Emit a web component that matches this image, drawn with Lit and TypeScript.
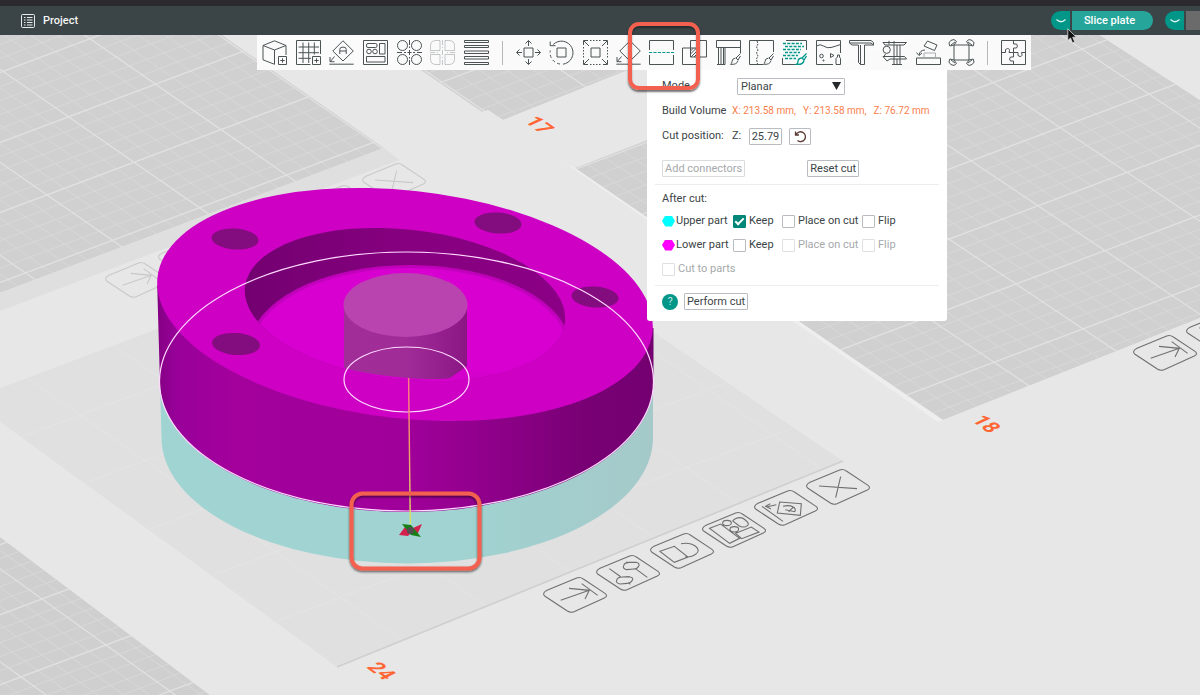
import { LitElement, html, svg, css } from "lit";
import { customElement } from "lit/decorators.js";

/* Toolbar glyphs, each drawn in a 25 x 25 box. */
const icons: Record<string, unknown> = {
  cube: svg`<path d="M12.5 .8 24 5.5V15M12.5 24.3 1 19.8V5.5L12.5 .8M1 5.5 12.5 10 24 5.5M12.5 10V24.3M16.5 24.5V16.5H24.5V24.5ZM20.5 18.3V22.7M18.3 20.5H22.7"/>`,
  grid: svg`<path d="M14.5 24.5H.5V.5H24.5V14M7 2.5V23M12.7 2.5V23M18.3 2.5V14.5M2.5 7H23M2.5 12.7H23M2.5 18.3H15M16.5 24.5V16.5H24.5V24.5ZM20.5 18.3V22.7M18.3 20.5H22.7"/>`,
  orient: svg`<path d="M14 .8 24.3 11 14 21 3.8 11ZM10.8 14V9.5Q10.8 7.2 13 7.2H15Q17.2 7.2 17.2 9.5V14M10.8 11H17.2M5.5 16.5 1.3 21.5M1 17V21.7H5.5M.3 24.2H24.7"/>`,
  arrange: svg`<path d="M.5 .5H24.5V24.5H.5ZM16.5 3.5H22V14H16.5ZM3.5 16.5H22V22H3.5Z"/><rect x="3.5" y="3.5" width="10.5" height="4" rx="1.5"/><circle cx="6" cy="11.5" r="2.3"/><circle cx="12" cy="11.5" r="2.3"/>`,
  objects: svg`<circle cx="5.5" cy="5.5" r="5"/><circle cx="19.5" cy="5.5" r="5"/><circle cx="5.5" cy="19.5" r="5"/><circle cx="19.5" cy="19.5" r="5"/><path d="M12.5 0V5M12.5 6.5V8M12.5 10V15M12.5 17V18.5M12.5 20V25M0 12.5H5M7 12.5H9M10.5 12.5H14.5M16 12.5H18M20 12.5H25"/>`,
  parts: svg`<g opacity=".3"><path d="M10 .5V10.5H.5V6Q.5 .5 6 .5ZM15 .5H19Q24.5 .5 24.5 6V10.5H15ZM.5 14.5H10V24.5H6Q.5 24.5 .5 19ZM15 14.5H24.5V19Q24.5 24.5 19 24.5H15ZM12.5 0V5M12.5 7V8M12.5 10V15M12.5 17V18M12.5 20V25M0 12.5H5M7 12.5H8M17 12.5H18M20 12.5H25"/></g>`,
  layers: svg`<path d="M.5 .5H24.5V2.5H.5ZM.5 5.5H24.5V7.5H.5ZM.5 11H24.5V13.5H.5ZM.5 16.5H24.5V19H.5ZM.5 22.5H24.5V24.5H.5Z"/>`,
  move: svg`<path d="M8 8H17V17H8ZM12.5 6V.8M9.5 3.5 12.5 .5 15.5 3.5M12.5 19V24.2M9.5 21.5 12.5 24.5 15.5 21.5M6 12.5H.8M3.5 9.5 .5 12.5 3.5 15.5M19 12.5H24.2M21.5 9.5 24.5 12.5 21.5 15.5"/>`,
  rotate: svg`<path d="M8 8H17V17H8ZM4.2 4.5A11.6 11.6 0 1 1 14 24.2M1.2 1.5V5.7H6.5"/><path stroke-dasharray="3 2.5" d="M11 24A11.6 11.6 0 0 1 1.2 10.5"/>`,
  scale: svg`<path d="M8 8H17V17H8ZM.5 5V.5H5M20 .5H24.5V5M.5 20V24.5H5M20 24.5H24.5V20M1 1 6 6M24 1 19 6M1 24 6 19M24 24 19 19"/><path stroke-dasharray="1.5 1.5" d="M7 .5H19M7 24.5H19M.5 7V19M24.5 7V19"/>`,
  lay: svg`<path d="M14 .8 24.3 11 14 21 3.8 11ZM5.5 16.5 1.3 21.5M1 17V21.7H5.5M.3 24.2H24.7"/>`,
  cut: svg`<path d="M.5 10V.5H24.5V10M.5 15V24.5H24.5V15"/><path stroke="#00968a" stroke-dasharray="3.2 1.2" d="M0 12.5H25"/>`,
  boolean: svg`<path d="M8.5 .5H24.5V17H8.5ZM.5 8H17V24.5H.5ZM8.5 11 11.5 8M8.5 14 14.5 8M9 17 17 9M12 17 17 12M15 17 17 15"/>`,
  supports: svg`<path d="M24.5 13V.5H.5V7.5H24.5M2.5 7.5V24.5M5 7.5V24.5M7.5 7.5V24.5M1 24.5H9V7.5M24.5 13.5 20 18 22 20 24.5 16M19.5 18Q16 18.5 16 21.5 16 23.5 14.5 24.3 21 25 22 20.5"/>`,
  seam: svg`<path d="M14 24.5H.5V.5H24.5V12M24.5 13.5 20 18 22 20 24.5 16M19.5 18Q16 18.5 16 21.5 16 23.5 14.5 24.3 21 25 22 20.5"/><path stroke-dasharray="2 1" d="M8 1 9 4 7.5 7 9 10 7.5 13 9 16 7.5 19 8.5 24"/>`,
  fuzzy: svg`<path d="M4 .5H24.5V10M.5 18V24.5H14" /><g stroke="#00968a" stroke-width="1.3"><path stroke-dasharray="3 1.3" d="M1 3.5H20M3 6.5H22M1 9.5H19M3 12.5H18M1 15.5H16M3 18.5H14"/><path d="M24.5 13.5 20 18 22 20 24.5 16M19.5 18Q16 18.5 16 21.5 16 23.5 14.5 24.3 21 25 22 20.5"/></g>`,
  color: svg`<path d="M17 24.5H.5V.5H24.5V13M.5 6Q4 3.5 7.5 6T15 7.5 24.5 4.5M20 24.5V18.5L21.5 17V15H23.5V17L24.5 18.5V24.5ZM14.5 13.5 18 15.5 14.5 17.5Z"/><circle cx="5.5" cy="16" r="1.8"/><circle cx="7.5" cy="20.5" r=".6"/>`,
  text: svg`<path d="M.5 .5H22L24.5 2.5V5H15.5V24.5H11.5L9.5 22.5V5H3L.5 3ZM.5 3H22L24.5 5M11.5 5V24.5"/>`,
  measure: svg`<path d="M7 .8V4.5M12 4.5V1M1 2.5H24.5L22 5H3ZM1 16.5H22.5L24.5 19H8L5 21ZM12 5V24.5M18 5V24.5M15 5V16M15 19V24.5M10 24.5H20M3.5 14 2 16.5"/><circle cx="4.7" cy="9.8" r="3.6"/>`,
  assembly: svg`<path d="M.5 18H24.5V24.5H.5ZM11.5 1 21 5 18.5 10.5 8 6ZM9 10Q4 10 3 15M.5 12.5 3 15.5 6 13"/><path stroke="#a9adae" d="M8 18V13H19.5V18"/>`,
  skirt: svg`<path d="M5 5H20V20H5ZM.8 6A4 4 0 1 1 7.5 1.5L5 5ZM24.2 6A4 4 0 1 0 17.5 1.5L20 5ZM.8 19A4 4 0 1 0 7.5 23.5L5 20ZM24.2 19A4 4 0 1 1 17.5 23.5L20 20ZM2 5 6 2M23 5 19 2M2 20 6 23M23 20 19 23"/>`,
  puzzle: svg`<path d="M.5 .5H24.5V24.5H.5ZM12.5 .5V4Q16.5 3 16.5 6T12.5 8V12.5H17Q16 16.5 19 16.5T20.5 12.5H24.5M12.5 12.5V17Q8.5 16 8.5 19T12.5 21V24.5M.5 12.5H4.5Q3.5 8.5 6.5 8.5T8 12.5H12.5"/>`,
};

const groupOne = ["cube", "grid", "orient", "arrange", "objects", "parts", "layers"];
const groupTwo = ["move", "rotate", "scale", "lay", "cut", "boolean", "supports", "seam", "fuzzy", "color", "text", "measure", "assembly", "skirt"];

const icon = (name: string) =>
  html`<svg class="icon" viewBox="0 0 25 25" aria-hidden="true">${icons[name]}</svg>`;

/* Build plates: outline, then the two families of grid lines across it. */
interface Plate {
  id: string;
  points: string;
  x: number;
  y: number;
  slope: number;
  fill: string;
}
const plates: Plate[] = [
  { id: "p16", points: "0,30 215,30 384,148 0,293", x: 308, y: 97, slope: 0.694, fill: "#d0d0d0" },
  { id: "p17", points: "362,30 482,112 488,110 503,120 728,30", x: 530, y: 49, slope: 0.68, fill: "#d0d0d0" },
  { id: "p18", points: "575,168 930,30 1092,30 1200,100 1200,318 943,420", x: 1016, y: 284, slope: 0.67, fill: "#d0d0d0" },
  { id: "p23", points: "0,537 210,695 0,695", x: 42, y: 599, slope: 0.72, fill: "#cfcfcf" },
];

const gridPath = (p: Plate, major: boolean) => {
  let d = "";
  for (let i = -50; i <= 50; i++) {
    if ((i % 5 === 0) !== major) continue;
    const up = p.y + i * 14;
    const down = p.y - i * 18.6;
    d += `M${p.x - 800} ${up + 300}L${p.x + 800} ${up - 300}`;
    d += `M${p.x - 800} ${down - 800 * p.slope}L${p.x + 800} ${down + 800 * p.slope}`;
  }
  return d;
};

const tile = "M-84-14L5-51Q15-55 25-48L90-5Q100 3 88 9L-3 50Q-13 54-23 48L-90 4Q-101-5-84-14Z";
const tileGlyphs = {
  arrow: "M-43 16L43-14M-18-20L43-14L30 12M20-34L68 1",
  sliders: "M-56-13L-21 12M1 29L7 34M-34 21Q-31 12-18 12L4 11Q18 14 13 22 8 31-2 31L-24 33Q-38 30-34 21ZM-6-33L1-29M22-13L58 13M-13-22Q-10-32 2-32L24-32Q37-29 32-20 28-12 18-12L-4-10Q-17-13-13-22Z",
  shape: "M-66 1L-23-14 18 18-23 34ZM-3-22C35-29 60-4 43 8C35 16 20 19 10 17",
  layout: "M-73-5L-40-18 17 25-13 40ZM5 10L52-9 75 6 23 26ZM-34-21a13 8 0 1 0 26 0a13 8 0 1 0-26 0M-12-2a13 8 0 1 0 26 0a13 8 0 1 0-26 0M-4-27Q4-37 18-37 26-37 34-30L42-22Q46-14 34-10 24-7 16-12Z",
  orient: "M-19-18L46-13 43 22-26 15ZM-29-10L-59-3M-47-13L-61-5-45 3M-72-5L-9 40M-9-5C15-12 34 0 26 11L-2 5M22-3L8 12",
  close: "M-57-3L57 5M8-31L-7 32",
};
type TileName = keyof typeof tileGlyphs;
const tiles: [TileName, number, number, number][] = [
  ["arrow", 575, 595, 1],
  ["sliders", 628, 573, 1],
  ["shape", 682, 551, 1],
  ["layout", 734, 530, 1],
  ["orient", 786, 508, 1],
  ["close", 838, 487, 1],
  ["arrow", 1165, 353, 1],
  ["sliders", 1218, 332, 1],
  ["arrow", 137, 280, 0.25],
  ["sliders", 190, 258, 0.25],
  ["orient", 340, 203, 0.25],
  ["close", 394, 181, 0.25],
];

@customElement("plate-scene")
export class PlateScene extends LitElement {
  static styles = css`
    :host { display: block; }
    .scene { display: block; width: 100%; height: 100%; }
    .minor { stroke: #d8d8d8; stroke-width: 1; fill: none; }
    .major { stroke: #e1e1e1; stroke-width: 1.3; fill: none; }
    .tile { fill: none; stroke: #707070; stroke-width: 1.1; }
    .tile path { vector-effect: non-scaling-stroke; }
    .number { font: 700 18px Roboto, "Liberation Sans", sans-serif; fill: #ff6634; text-anchor: middle; }
    .loop { fill: none; stroke: #ffd9ff; stroke-width: 1.2; }
    .hole { fill: #830c7e; }
  `;

  render() {
    return html`<svg class="scene" viewBox="0 35 1200 660" preserveAspectRatio="xMidYMin slice" role="img" aria-label="Build plates">
      <defs>
        ${plates.map((p) => svg`<clipPath id=${p.id}><polygon points=${p.points}/></clipPath>`)}
        <clipPath id="p24"><polygon points="0,388 474,210 843,461 337,667 0,422"/></clipPath>
        <clipPath id="rim"><ellipse cx="405" cy="304.5" rx="161" ry="75" transform="rotate(6.3 405 304.5)"/></clipPath>
        <linearGradient id="side"><stop offset="0" stop-color="#840083"/><stop offset=".04" stop-color="#99009a"/><stop offset=".15" stop-color="#a3009c"/><stop offset=".5" stop-color="#a0009a"/><stop offset=".7" stop-color="#8c0087"/><stop offset=".86" stop-color="#780074"/><stop offset="1" stop-color="#740070"/></linearGradient>
        <linearGradient id="base"><stop offset="0" stop-color="#a0d4d2"/><stop offset=".6" stop-color="#a0d3d1"/><stop offset="1" stop-color="#a5c9c9"/></linearGradient>
        <linearGradient id="wall"><stop offset="0" stop-color="#720070"/><stop offset=".5" stop-color="#86007f"/><stop offset="1" stop-color="#8b0086"/></linearGradient>
        <linearGradient id="post"><stop offset="0" stop-color="#a02d98"/><stop offset=".5" stop-color="#a02c98"/><stop offset="1" stop-color="#8a1784"/></linearGradient>
        <linearGradient id="axis" x1="0" y1="0" x2="0" y2="1"><stop offset="0" stop-color="#ff7a80"/><stop offset=".5" stop-color="#f0a068"/><stop offset="1" stop-color="#d8e860"/></linearGradient>
        <filter id="drop" x="-10%" y="-10%" width="120%" height="130%"><feDropShadow dx="0" dy="1.5" stdDeviation="1.2" flood-opacity=".6"/></filter>
      </defs>
      <rect x="0" y="30" width="1200" height="670" fill="#e7e7e7"/>
      <polygon points="0,293 384,148 399,160 0,311" fill="#dfdfdf"/>
      <polygon points="565,163 575,168 943,420 938,422" fill="#eeeeee"/>
      ${plates.map((p) => svg`<g clip-path="url(#${p.id})">
        <polygon points=${p.points} fill=${p.fill}/>
        <path class="minor" d=${gridPath(p, false)}/>
        <path class="major" d=${gridPath(p, true)}/>
      </g>`)}
      <g clip-path="url(#p24)">
        <polygon points="0,388 474,210 843,461 337,667 0,422" fill="#e0e0e0"/>
        <path d=${gridPath({ ...plates[0], x: 600, y: 500, slope: 0.7 }, true)} stroke="#e4e4e4" fill="none"/>
      </g>
      <path d="M337 667 843 461" stroke="#cfcfcf" stroke-width="1.6"/>
      ${tiles.map(([name, x, y, o]) => svg`<g class="tile" opacity=${o} transform="translate(${x} ${y}) scale(.3333)"><path d=${tile}/><path d=${tileGlyphs[name]}/></g>`)}
      <text class="number" transform="matrix(.9 .65 -1.05 .5 533 128)">17</text>
      <text class="number" transform="matrix(.9 .65 -1.05 .5 980 427)">18</text>
      <text class="number" transform="matrix(.9 .65 -1.05 .5 375 674)">24</text>

      <path d="M160 384 161.500 438A245 125 0 0 0 653 438V380Z" fill="url(#base)"/>
      <path d="M157.200 285 160 384A246.700 130 0 0 0 653.500 380V328Z" fill="url(#side)"/>
      <ellipse cx="405" cy="304.500" rx="249" ry="114" transform="rotate(6.3 405 304.5)" fill="#cd00c4"/>
      <g clip-path="url(#rim)">
        <rect x="240" y="220" width="330" height="170" fill="url(#wall)"/>
        <ellipse cx="410" cy="347" rx="160" ry="82" fill="#c000ba"/>
        <ellipse cx="410" cy="350" rx="158" ry="82" fill="#d800d0"/>
        <path d="M300 385Q405 345 540 385L580 400H240Z" fill="#cf00c6" opacity=".5"/>
      </g>
      <ellipse class="hole" cx="235" cy="239" rx="23.500" ry="10.500" transform="rotate(4 235 239)"/>
      <ellipse class="hole" cx="498" cy="223" rx="23.500" ry="10.500" transform="rotate(4 498 223)"/>
      <ellipse class="hole" cx="595" cy="297" rx="23.500" ry="10.500" transform="rotate(4 595 297)"/>
      <ellipse class="hole" cx="236" cy="344" rx="24" ry="11" transform="rotate(4 236 344)"/>
      <path d="M344 305V368Q370 375 408 378 440 380 450 378L467 366V305Z" fill="url(#post)"/>
      <ellipse cx="405.500" cy="305" rx="62" ry="32" fill="#b944af"/>
      <ellipse class="loop" cx="406.500" cy="381.500" rx="247" ry="129.500"/>
      <ellipse class="loop" cx="406.500" cy="379.500" rx="62.500" ry="32.500"/>
      <polygon points="407.900,378 409.300,378 411,524 409.600,524" fill="url(#axis)"/>
      <path d="M399 535 405 527 415 529 408 536Z" fill="#d4204c"/>
      <path d="M413 528 422 524 418 533 412 534Z" fill="#d4204c"/>
      <path d="M402 524 411 525 421 537 411 535Z" fill="#168016"/>
      <circle cx="410.500" cy="530.500" r="3.600" fill="#505050"/>
      <rect x="351.500" y="493.500" width="128" height="75" rx="11" fill="none" stroke="#f4604f" stroke-width="4" filter="url(#drop)"/>
    </svg>`;
  }
}

@customElement("cut-panel")
export class CutPanel extends LitElement {
  static styles = css`
    :host { display: block; box-sizing: border-box; background: #fff; border-radius: 0 0 3px 3px; padding: 7px 8px 11px; color: #3b4446; font: 11px/18px Roboto, "Liberation Sans", sans-serif; }
    .section { display: grid; gap: 6px; padding: 0 7px; }
    .settings { gap: 7px; }
    .row { display: flex; align-items: center; height: 18px; white-space: nowrap; }
    .name { width: 70px; flex: none; }
    .wide { width: 75px; flex: none; }
    .volume { color: #f8804e; display: flex; gap: 7px; font-size: 10px; }
    .axis { width: 17px; }
    .field, .push, .choice { box-sizing: border-box; height: 17px; border: 1px solid #b9bdc1; border-radius: 1px; background: #fff; color: inherit; font: inherit; line-height: 15px; padding: 0 2px; margin: 0; }
    .picker { position: relative; width: 108px; height: 17px; display: flex; }
    .choice { appearance: none; width: 100%; padding: 0 3px; }
    .caret { position: absolute; right: 4px; top: 4px; width: 9px; height: 8px; fill: #25292b; pointer-events: none; }
    .field { width: 33px; text-align: center; padding: 0; margin-right: 7px; }
    .undo { width: 22px; display: flex; align-items: center; justify-content: center; padding: 0; }
    .undo svg { width: 13px; height: 13px; fill: none; stroke: #5c3b34; stroke-width: 1.3; }
    .actions { margin-top: 7px; gap: 62px; }
    .push:disabled { color: #a5a9ab; border-color: #d9dbdd; }
    .rule { border: 0; border-top: 1px solid #ededed; margin: 7px 0 6px; }
    .heading { height: 15px; }
    .part { display: grid; grid-template-columns: 71px 49px 80px auto; }
    .swatch { width: 13px; height: 11px; margin-right: 1px; clip-path: polygon(25% 0, 75% 0, 100% 50%, 75% 100%, 25% 100%, 0 50%); }
    .upper { background: #0ff; }
    .lower { background: #f0f; }
    .title, .tick { display: flex; align-items: center; }
    .tick { gap: 3px; }
    .off { color: #a5a9ab; }
    .box { appearance: none; box-sizing: border-box; width: 13px; height: 13px; margin: 0; border: 1px solid #b9bdc1; border-radius: 1px; background: #fff; display: grid; place-items: center; }
    .box:disabled { border-color: #dfe0e2; }
    .box:checked { background: #00877a; border-color: #00877a; }
    .box:checked::after { content: ""; width: 7px; height: 3px; border: solid #fff; border-width: 0 0 2px 2px; transform: translateY(-1px) rotate(-45deg); }
    .finish { gap: 6px; }
    .help { width: 16px; height: 16px; border: 0; border-radius: 50%; background: #009688; color: #bfe6e1; font: 11px/16px Roboto, "Liberation Sans", sans-serif; padding: 0; align-self: end; }
  `;

  private tick(text: string, checked: boolean, disabled: boolean) {
    return html`<label class="tick ${disabled ? "off" : ""}"><input class="box" type="checkbox" .checked=${checked} ?disabled=${disabled}>${text}</label>`;
  }

  render() {
    return html`
      <div class="section settings">
        <div class="row">
          <label class="wide" for="mode">Mode</label>
          <span class="picker">
            <select class="choice" id="mode"><option>Planar</option></select>
            <svg class="caret" viewBox="0 0 9 8"><path d="M0 0H9L4.500 8Z"/></svg>
          </span>
        </div>
        <div class="row">
          <span class="name">Build Volume</span>
          <span class="volume"><span>X: 213.58 mm,</span><span>Y: 213.58 mm,</span><span>Z: 76.72 mm</span></span>
        </div>
        <div class="row">
          <span class="name">Cut position:</span>
          <label class="axis" for="z">Z:</label>
          <input class="field" id="z" type="text" value="25.79">
          <button class="push undo" aria-label="Reset position"><svg viewBox="0 0 13 13"><path d="M1.500 1.500V5H5M2 4.800A4.900 4.900 0 1 1 3.500 10.500"/></svg></button>
        </div>
        <div class="row actions">
          <button class="push" disabled>Add connectors</button>
          <button class="push">Reset cut</button>
        </div>
      </div>
      <hr class="rule">
      <div class="section">
        <div class="row heading">After cut:</div>
        <div class="row part">
          <span class="title"><i class="swatch upper"></i>Upper part</span>
          ${this.tick("Keep", true, false)}${this.tick("Place on cut", false, false)}${this.tick("Flip", false, false)}
        </div>
        <div class="row part">
          <span class="title"><i class="swatch lower"></i>Lower part</span>
          ${this.tick("Keep", false, false)}${this.tick("Place on cut", false, true)}${this.tick("Flip", false, true)}
        </div>
        <div class="row">${this.tick("Cut to parts", false, true)}</div>
      </div>
      <hr class="rule">
      <div class="section">
        <div class="row finish">
          <button class="help">?</button>
          <button class="push">Perform cut</button>
        </div>
      </div>`;
  }
}

@customElement("app-root")
export class AppRoot extends LitElement {
  static styles = css`
    :host { display: flex; flex-direction: column; height: 100vh; overflow: hidden; font: 12px/16px Roboto, "Liberation Sans", sans-serif; }
    .bar { flex: none; box-sizing: border-box; height: 35px; border-top: 6px solid #2c2a2e; background: #3b4446; color: #f4f6f6; display: flex; align-items: center; padding-left: 21px; }
    .tab { display: flex; align-items: center; gap: 8px; background: none; border: 0; padding: 0; color: inherit; font: 500 11px/16px Roboto, "Liberation Sans", sans-serif; }
    .tab svg { width: 14px; height: 14px; fill: none; stroke: #e6eaea; stroke-width: 1; }
    .run { margin-left: auto; display: flex; gap: 12px; }
    .split { display: flex; gap: 2px; height: 19px; }
    .more, .slice, .print { border: 0; padding: 0; height: 19px; color: #fff; }
    .more { width: 19px; background: #009688; border-radius: 10px 0 0 10px; display: grid; place-items: center; }
    .more svg { width: 10px; height: 4px; fill: none; stroke: #e0f4f1; stroke-width: 1.2; }
    .slice { width: 81px; background: #26a69a; border-radius: 0 10px 10px 0; font: 500 11px/19px Roboto, "Liberation Sans", sans-serif; padding-right: 6px; }
    .print { width: 14px; background: #6b6b6b; }
    .view { position: relative; flex: 1; min-height: 0; }
    .canvas { height: 100%; }
    .tools { position: absolute; top: 0; left: 257px; display: flex; align-items: center; height: 35px; padding: 0 5px; background: rgba(252, 252, 252, .94); }
    .set { display: flex; justify-content: space-between; }
    .first { width: 227px; }
    .second { width: 458px; }
    .gap { width: 1px; height: 24px; background: #b5b7b8; margin: 0 13px; }
    .tool { border: 0; background: none; padding: 0; width: 25px; height: 25px; display: block; position: relative; }
    .icon { display: block; width: 25px; height: 25px; fill: none; stroke: #4b5355; stroke-width: 1; overflow: visible; }
    .panel { position: absolute; top: 35px; left: 390px; width: 300px; }
    .mark { position: absolute; z-index: 2; left: -21px; top: -18px; width: 64px; height: 60px; border: 4px solid #f4604f; border-radius: 11px; box-shadow: 0 2px 2px rgba(0, 0, 0, .55), inset 0 2px 2px rgba(0, 0, 0, .35); pointer-events: none; }
    .pointer { position: absolute; z-index: 3; left: 1067px; top: -7px; width: 10px; height: 16px; fill: #111; stroke: #ddd; stroke-width: .8; pointer-events: none; }
  `;

  private tool = (name: string) => html`<button class="tool" aria-label=${name}>${icon(name)}${name === "cut" ? html`<span class="mark"></span>` : ""}</button>`;

  private more = html`<svg viewBox="0 0 10 4" aria-hidden="true"><path d="M.5 .5Q5 5 9.500 .5"/></svg>`;

  render() {
    return html`
      <header class="bar">
        <button class="tab">
          <svg viewBox="0 0 14 14" aria-hidden="true"><rect x=".5" y=".5" width="13" height="13" rx="1"/><path d="M3 3.500H4.500M6 3.500H11.500M3 6H4.500M6 6H11.500M3 8.500H4.500M6 8.500H11.500M3 11H4.500M6 11H11.500"/></svg>
          Project
        </button>
        <div class="run">
          <div class="split"><button class="more" aria-label="Slice options">${this.more}</button><button class="slice">Slice plate</button></div>
          <div class="split"><button class="more" aria-label="Print options">${this.more}</button><button class="print" aria-label="Print"></button></div>
        </div>
      </header>
      <main class="view">
        <plate-scene class="canvas"></plate-scene>
        <nav class="tools">
          <cut-panel class="panel"></cut-panel>
          <div class="set first">${groupOne.map(this.tool)}</div>
          <span class="gap"></span>
          <div class="set second">${groupTwo.map(this.tool)}</div>
          <span class="gap"></span>
          ${this.tool("puzzle")}
        </nav>
        <svg class="pointer" viewBox="0 0 10 16" aria-hidden="true"><path d="M.8 .8V12.500L3.500 10 5.500 14.800 7.700 13.900 5.700 9.200H9.300Z"/></svg>
      </main>`;
  }
}
